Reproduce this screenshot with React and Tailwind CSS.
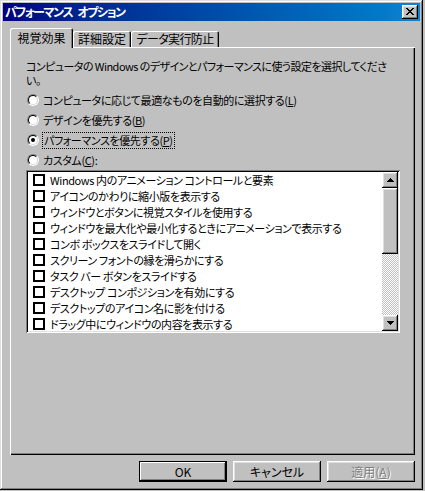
const raised =
  'shadow-[inset_-1px_-1px_#000,inset_1px_1px_#fff,inset_-2px_-2px_#808080,inset_2px_2px_#dfdfdf]';
const sunken =
  'shadow-[inset_1px_1px_#808080,inset_-1px_-1px_#fff,inset_2px_2px_#000,inset_-2px_-2px_#dfdfdf]';
const tabEdge = 'shadow-[inset_1px_1px_#fff,inset_-1px_0_#000,inset_-2px_0_#808080]';

const items = [
  'Windows 内のアニメーション コントロールと要素',
  'アイコンのかわりに縮小版を表示する',
  'ウィンドウとボタンに視覚スタイルを使用する',
  'ウィンドウを最大化や最小化するときにアニメーションで表示する',
  'コンボ ボックスをスライドして開く',
  'スクリーン フォントの縁を滑らかにする',
  'タスク バー ボタンをスライドする',
  'デスクトップ コンポジションを有効にする',
  'デスクトップのアイコン名に影を付ける',
  'ドラッグ中にウィンドウの内容を表示する',
];

function Radio({ checked }) {
  return (
    <span className="flex w-[12px] h-[12px] shrink-0 rounded-full border border-t-[#808080] border-l-[#808080] border-r-white border-b-white">
      <span className="flex items-center justify-center w-full h-full rounded-full border border-t-black border-l-black border-r-[#dfdfdf] border-b-[#dfdfdf] bg-white">
        {checked && <span className="w-[4px] h-[4px] rounded-full bg-black" />}
      </span>
    </span>
  );
}

function Arrow({ down }) {
  return (
    <svg width="7" height="4" viewBox="0 0 7 4" shapeRendering="crispEdges" className={down ? 'rotate-180' : ''}>
      <path d="M3 0h1v1H3zM2 1h3v1H2zM1 2h5v1H1zM0 3h7v1H0z" fill="#000" />
    </svg>
  );
}

function Button({ children, primary, disabled }) {
  return (
    <div
      className={`w-[88px] h-[21px] flex items-center justify-center bg-[#c0c0c0] ${
        primary
          ? 'border border-black shadow-[inset_-1px_-1px_#000,inset_1px_1px_#fff,inset_-2px_-2px_#808080]'
          : raised
      } ${disabled ? 'text-[#808080] [text-shadow:1px_1px_#fff]' : 'text-black'}`}
    >
      {children}
    </div>
  );
}

export default function App() {
  return (
    <div className="w-[425px] h-[491px] bg-[#c0c0c0] font-['Noto_Sans_CJK_JP',sans-serif] text-[11px] tracking-[-0.4px] text-black [font-feature-settings:'palt']">
      <div className="w-[423px] h-[490px] p-[3px] flex flex-col bg-[#c0c0c0] shadow-[inset_-1px_-1px_#000,inset_1px_1px_#dfdfdf,inset_-2px_-2px_#808080,inset_2px_2px_#fff]">
        {/* title bar */}
        <div className="h-[18px] flex items-center justify-between pl-[2px] pr-[2px] bg-linear-to-r from-[#000080] to-[#1084d0]">
          <span className="flex gap-[5px] text-white font-bold text-[12px] tracking-[-1.4px] leading-none">
            <span>パフォーマンス</span>
            <span>オプション</span>
          </span>
          <div className={`w-[16px] h-[14px] flex items-center justify-center bg-[#c0c0c0] ${raised}`}>
            <svg width="8" height="7" viewBox="0 0 8 7" shapeRendering="crispEdges" className="-mt-[1px]">
              <path
                d="M0 0h2v1H0zM6 0h2v1H6zM1 1h2v1H1zM5 1h2v1H5zM2 2h4v1H2zM3 3h2v1H3zM2 4h4v1H2zM1 5h2v1H1zM5 5h2v1H5zM0 6h2v1H0zM6 6h2v1H6z"
                fill="#000"
              />
            </svg>
          </div>
        </div>

        <div className="ml-[7px] mt-[7px] flex flex-col">
          {/* tabs */}
          <div className="flex items-end h-[19px] text-[12px] tracking-normal">
            <div className={`relative z-10 w-[63px] h-[20px] -mb-[1px] flex items-center justify-center bg-[#c0c0c0] rounded-t-[2px] ${tabEdge}`}>
              視覚効果
            </div>
            <div className={`w-[58px] h-[16px] flex items-center justify-center bg-[#c0c0c0] rounded-t-[2px] ${tabEdge}`}>
              詳細設定
            </div>
            <div className={`w-[88px] h-[16px] flex items-center justify-center bg-[#c0c0c0] rounded-t-[2px] tracking-[-0.6px] ${tabEdge}`}>
              データ実行防止
            </div>
          </div>

          {/* panel */}
          <div className="w-[405px] h-[408px] bg-[#c0c0c0] pt-[12px] pl-[16px] flex flex-col shadow-[inset_1px_1px_#fff,inset_-1px_-1px_#000,inset_-2px_-2px_#808080]">
            <p className="leading-[14px] whitespace-nowrap tracking-[-0.55px]">
              コンピュータの Windows のデザインとパフォーマンスに使う設定を選択してくださ
              <br />
              い。
            </p>

            <div className="mt-[3px] flex flex-col">
              <div className="h-[20px] flex items-center pl-[1px] gap-[4px]">
                <Radio />
                <span>
                  コンピュータに応じて最適なものを自動的に選択する(<span className="underline">L</span>)
                </span>
              </div>
              <div className="h-[20px] flex items-center pl-[1px] gap-[4px]">
                <Radio />
                <span>
                  デザインを優先する(<span className="underline">B</span>)
                </span>
              </div>
              <div className="h-[20px] flex items-center pl-[1px] gap-[4px]">
                <Radio checked />
                <span className="outline outline-dotted outline-black px-[1px] leading-[15px]">
                  パフォーマンスを優先する(<span className="underline">P</span>)
                </span>
              </div>
              <div className="h-[20px] flex items-center pl-[1px] gap-[4px]">
                <Radio />
                <span>
                  カスタム(<span className="underline">C</span>):
                </span>
              </div>
            </div>

            {/* list box */}
            <div className={`w-[374px] h-[163px] p-[2px] flex bg-white ${sunken}`}>
              <div className="flex-1 overflow-hidden flex flex-col">
                {items.map((t) => (
                  <div key={t} className="h-[16px] shrink-0 flex items-center pl-[5px] gap-[5px] whitespace-nowrap">
                    <span className="w-[12px] h-[12px] shrink-0 border-2 border-black bg-white" />
                    <span>{t}</span>
                  </div>
                ))}
              </div>
              <div className="w-[16px] flex flex-col">
                <div className={`h-[16px] shrink-0 flex items-center justify-center bg-[#c0c0c0] ${raised}`}>
                  <Arrow />
                </div>
                <div className={`h-[66px] shrink-0 bg-[#c0c0c0] ${raised}`} />
                <div className="flex-1 bg-[repeating-conic-gradient(#c0c0c0_0%_25%,#ffffff_0%_50%)] bg-[length:2px_2px]" />
                <div className={`h-[16px] shrink-0 flex items-center justify-center bg-[#c0c0c0] ${raised}`}>
                  <Arrow down />
                </div>
              </div>
            </div>
          </div>

          {/* buttons */}
          <div className="w-[405px] mt-[6px] flex justify-end gap-[6px] text-[12px] tracking-normal">
            <Button primary>OK</Button>
            <Button>キャンセル</Button>
            <Button disabled>
              適用(<span className="underline">A</span>)
            </Button>
          </div>
        </div>
      </div>
    </div>
  );
}
